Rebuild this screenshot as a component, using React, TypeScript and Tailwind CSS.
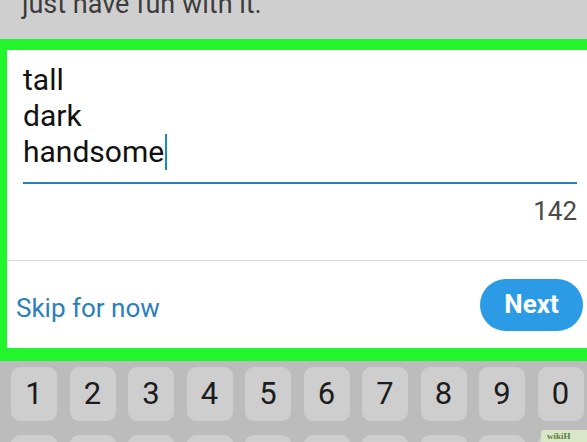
import React from 'react';

const keys = ['1', '2', '3', '4', '5', '6', '7', '8', '9', '0'];

export default function App() {
    return (
        <div className="w-[587px] h-[442px] overflow-hidden bg-[#cfcfcf] flex flex-col relative" style={{ fontFamily: 'Roboto, "Liberation Sans", sans-serif' }}>
            {/* Previous hint text, cut off at top */}
            <div className="h-[39px] shrink-0 overflow-hidden pl-[22px]">
                <p className="-mt-[12px] text-[27px] leading-[32px] text-[#3c3c3c]">just have fun with it.</p>
            </div>

            {/* Highlighted bio card */}
            <div className="shrink-0 bg-[#22f52c] pt-[11px] pl-[7px] pb-[13px]">
                <div className="bg-white h-[298px] flex flex-col">
                    <div className="pt-[12px] pl-[16px] pr-[10px]">
                        <div className="text-[30px] leading-[36px] text-[#111]">
                            <div>tall</div>
                            <div>dark</div>
                            <div>
                                handsome<span className="inline-block align-top w-[2px] h-[36px] bg-[#1b86cc] ml-[1px]" />
                            </div>
                        </div>
                        <div className="mt-[12px] h-[2px] bg-[#2a7dbf]" />
                        <div className="mt-[12px] text-right text-[26px] leading-[30px] text-[#4a4a4a]">142</div>
                    </div>
                    <div className="mt-auto h-[1px] bg-[#d6d6d6]" />
                    <div className="h-[87px] flex items-center justify-between pl-[9px] pr-[4px]">
                        <span className="pt-[8px] text-[26px] text-[#2a7fbc]">Skip for now</span>
                        <button className="w-[103px] h-[52px] rounded-full bg-[#2c9be6] text-white text-[26px] font-bold">Next</button>
                    </div>
                </div>
            </div>

            {/* Keyboard */}
            <div className="flex-1 bg-[#bcbcbc] pt-[6px] pl-[11px] flex flex-col gap-[14px]">
                <div className="flex gap-[12.5px]">
                    {keys.map((k) => (
                        <div key={k} className="w-[46px] h-[54px] rounded-[9px] bg-[#cecece] flex items-center justify-center text-[31px] text-[#1c1c1c]">
                            {k}
                        </div>
                    ))}
                </div>
                <div className="flex gap-[12.5px]">
                    {keys.map((k) => (
                        <div key={k} className="w-[46px] h-[54px] rounded-[9px] bg-[#cecece]" />
                    ))}
                </div>
            </div>

            {/* watermark */}
            <div className="absolute right-0 bottom-0 w-[46px] h-[12px] rounded-tl-[3px] bg-[#d9e6c8] text-[9px] leading-[12px] font-bold text-[#5d7d3c] pl-[6px]" style={{ fontFamily: '"Liberation Serif", serif' }}>
                wikiH
            </div>
        </div>
    );
}
